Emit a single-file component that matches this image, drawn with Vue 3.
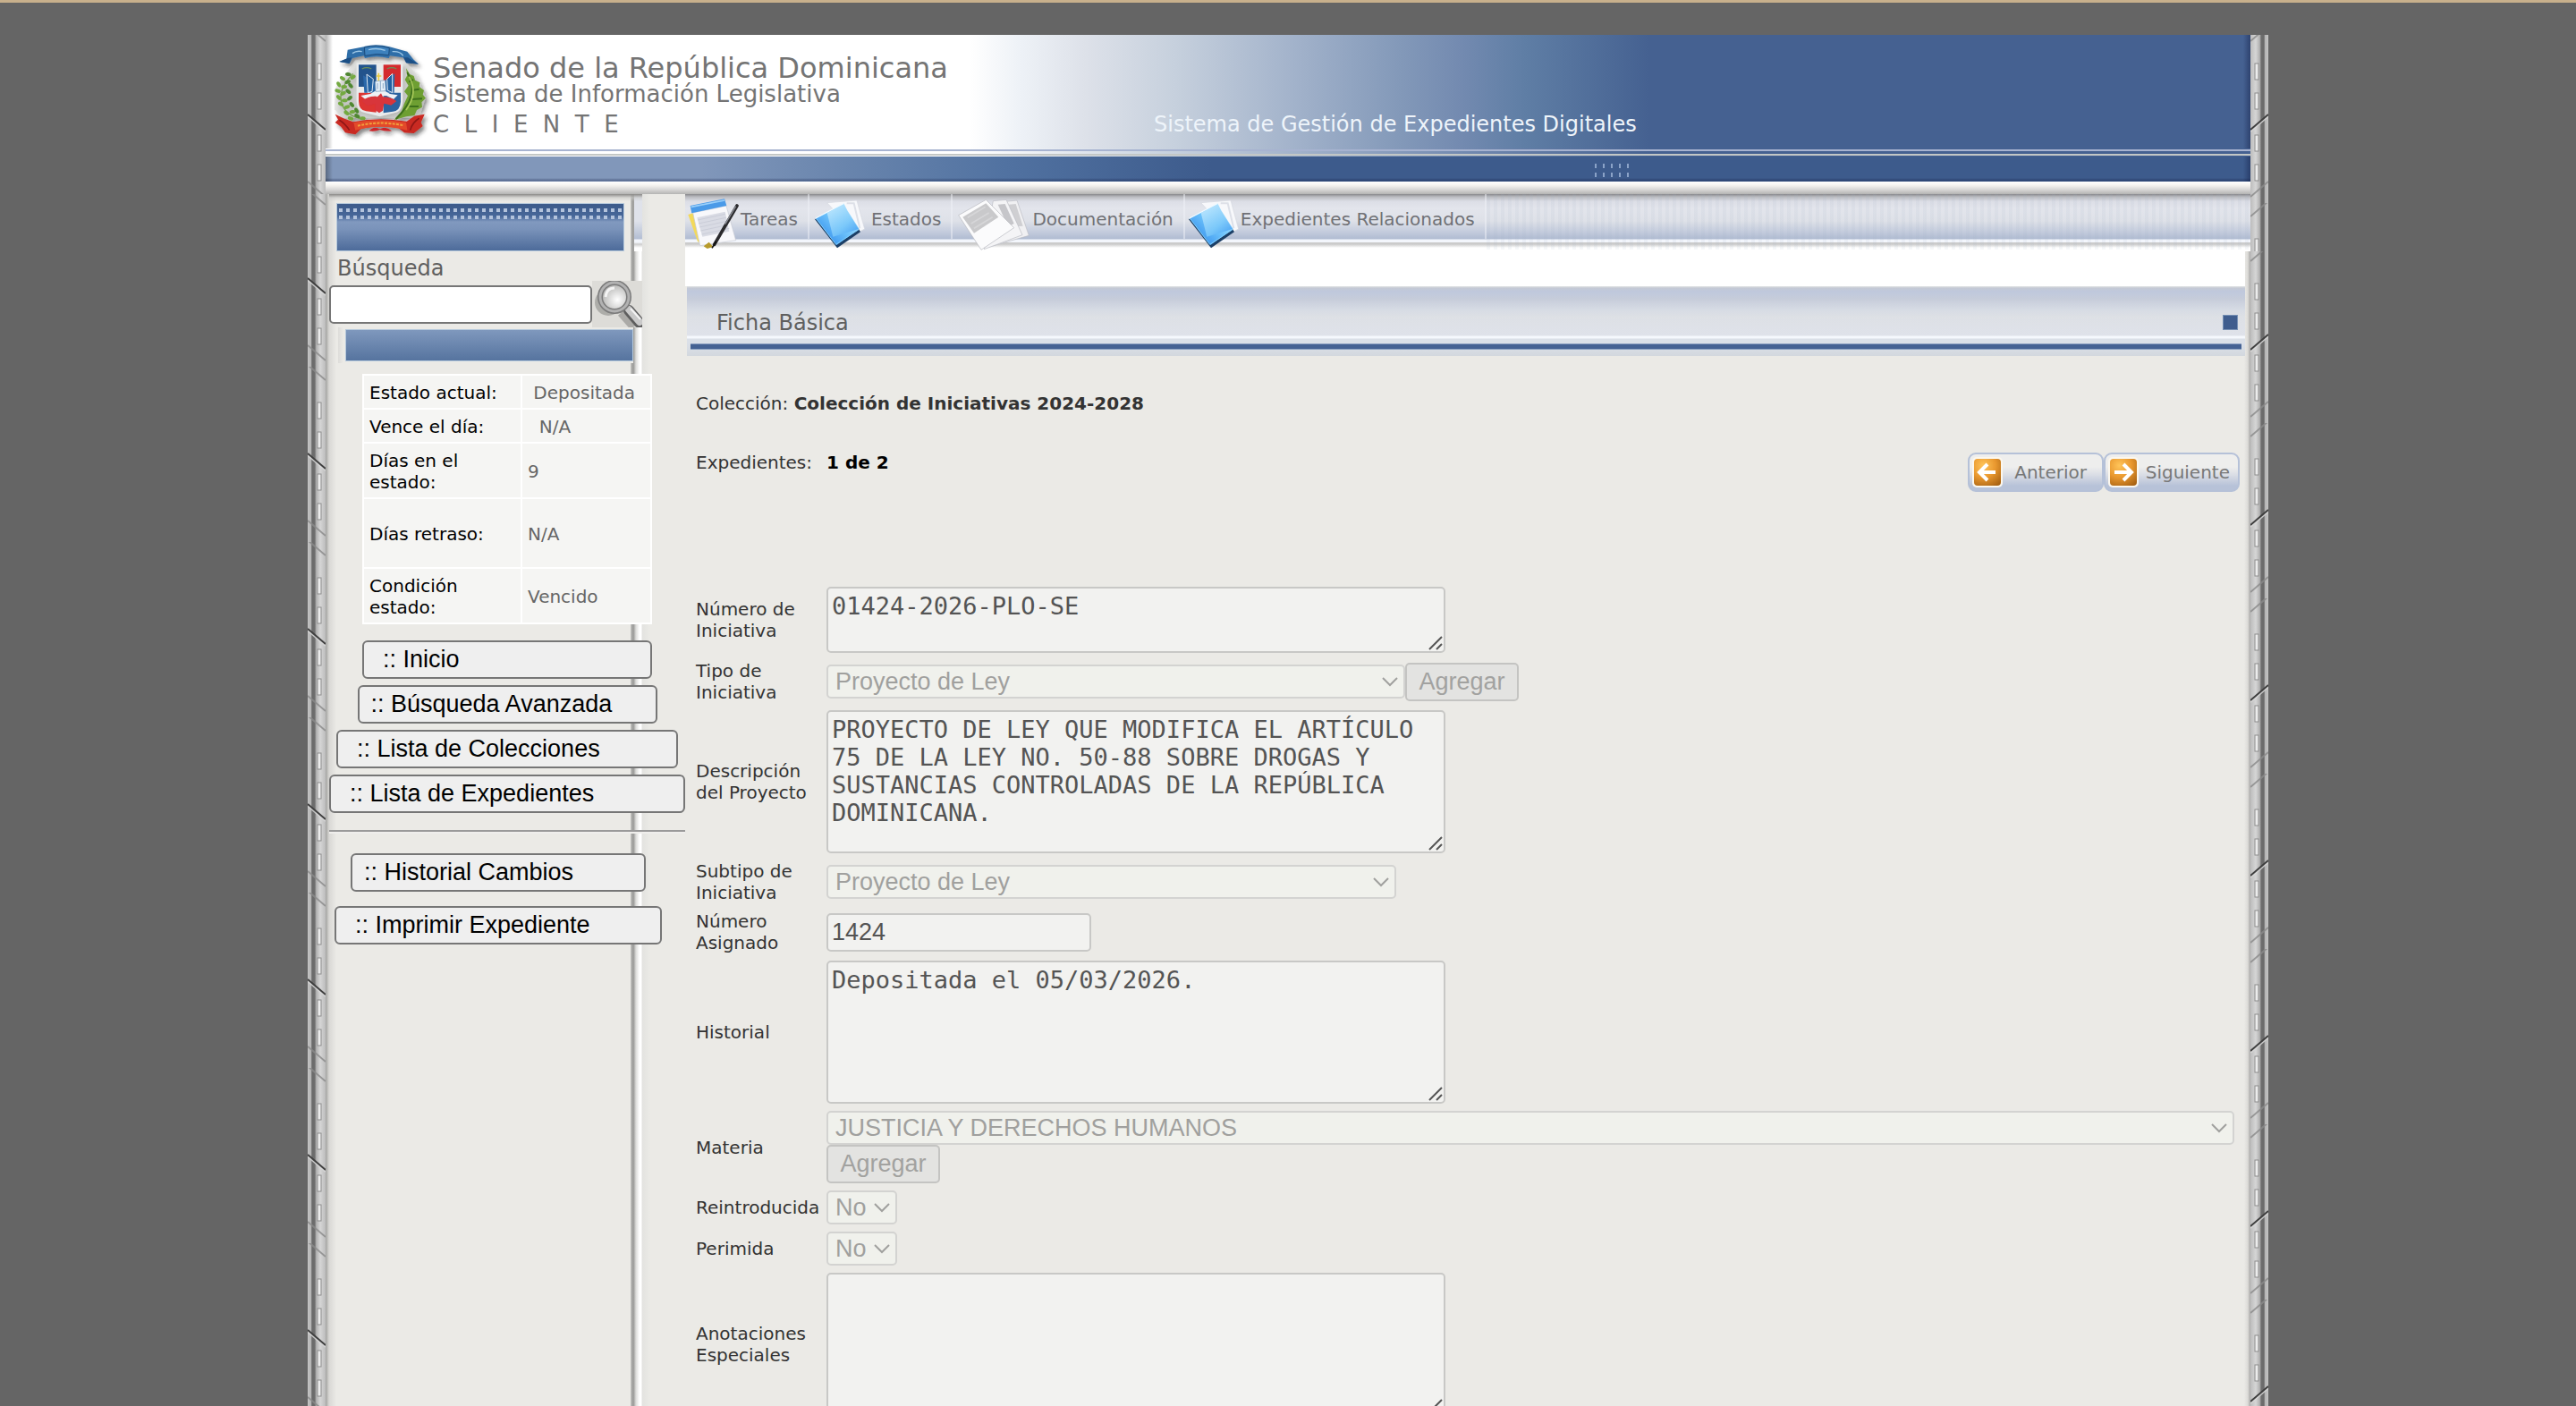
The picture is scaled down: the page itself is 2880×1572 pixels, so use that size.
<script setup>
import { ref } from 'vue'

const query = ref('')

const tabs = [
  { id: 'tareas', label: 'Tareas', icon: 'task', box: '18 30 186 180', width: 62 },
  { id: 'estados', label: 'Estados', icon: 'folder', box: '441 30 207 180', width: 69 },
  { id: 'documentacion', label: 'Documentación', icon: 'photos', box: '924 30 267 180', width: 89 },
  { id: 'relacionados', label: 'Expedientes Relacionados', icon: 'folder', box: '447 30 186 180', width: 62 },
]

const status = [
  { label: 'Estado actual:', value: '\u00a0Depositada', size: 'short' },
  { label: 'Vence el día:', value: '\u00a0\u00a0N/A', size: 'short' },
  { label: 'Días en el estado:', value: '9', size: 'medium' },
  { label: 'Días retraso:', value: 'N/A', size: 'tall' },
  { label: 'Condición estado:', value: 'Vencido', size: 'medium' },
]

const menu = [
  { label: ':: Inicio', width: 324, indent: true },
  { label: ':: Búsqueda Avanzada', width: 335, indent: false },
  { label: ':: Lista de Colecciones', width: 382, indent: true },
  { label: ':: Lista de Expedientes', width: 398, indent: true },
]

const tools = [
  { label: ':: Historial Cambios', width: 330, indent: false },
  { label: ':: Imprimir Expediente', width: 366, indent: true },
]

const numero = '01424-2026-PLO-SE'
const descripcion =
  'PROYECTO DE LEY QUE MODIFICA EL ARTÍCULO 75 DE LA LEY NO. 50-88 SOBRE DROGAS Y SUSTANCIAS CONTROLADAS DE LA REPÚBLICA DOMINICANA.'
const historial = 'Depositada el 05/03/2026.'

const laurel = [
  [152, 142, 10], [168, 152, -40], [133, 156, 30], [150, 168, -20], [120, 176, 60], [138, 184, 0],
  [160, 180, 50], [117, 198, 20], [135, 206, -30], [152, 200, 40], [120, 220, 50], [140, 230, 0],
  [157, 222, -40], [127, 242, 30], [148, 252, -20], [164, 244, 50], [146, 272, 40], [166, 268, -10],
  [182, 282, 30], [200, 290, 0], [160, 290, 20], [180, 264, 60],
]
</script>

<template>
  <div class="page">
    <svg class="defs" width="0" height="0" aria-hidden="true">
      <defs>
        <linearGradient id="railBase">
          <stop offset="0" stop-color="#c4c4c4" />
          <stop offset=".18" stop-color="#b4b4b4" />
          <stop offset=".24" stop-color="#6a6a6a" />
          <stop offset=".4" stop-color="#6e6e6e" />
          <stop offset=".48" stop-color="#b0b0b0" />
          <stop offset=".7" stop-color="#d6d6d6" />
          <stop offset="1" stop-color="#bcbcbc" />
        </linearGradient>
        <g id="railTile">
          <rect width="20" height="196" fill="url(#railBase)" />
          <g fill="#ececec" stroke="#8c8c8c">
            <rect x="11" y="40" width="4" height="18" />
            <rect x="11" y="73" width="4" height="18" />
            <rect x="11" y="120" width="4" height="18" />
            <rect x="11" y="153" width="4" height="18" />
          </g>
          <path d="M0 172l20 17M0 -2l20 17" stroke="#8a8a8a" stroke-width="2" opacity=".8" />
          <path d="M0 99l20 17" stroke="#d8d8d8" stroke-width="2" opacity=".8" />
          <path d="M0 97l20 17" stroke="#3e3e3e" stroke-width="2" />
        </g>
        <pattern id="railHead" width="20" height="196" patternUnits="userSpaceOnUse" y="-8">
          <use href="#railTile" />
        </pattern>
        <pattern id="railLeft" width="20" height="196" patternUnits="userSpaceOnUse" y="175">
          <use href="#railTile" />
        </pattern>
        <pattern id="railRight" width="20" height="196" patternUnits="userSpaceOnUse" y="42">
          <use href="#railTile" />
        </pattern>
        <linearGradient id="folderBlue" x1="0" y1="1" x2="1" y2="0">
          <stop offset="0" stop-color="#1f7ae6" />
          <stop offset=".5" stop-color="#6cc2fb" />
          <stop offset="1" stop-color="#d8f3ff" />
        </linearGradient>
        <linearGradient id="folderFront" x1="0" y1="0" x2="1" y2="1">
          <stop offset="0" stop-color="#d5f2ff" />
          <stop offset=".6" stop-color="#7cc9fa" />
          <stop offset="1" stop-color="#2f8ff0" />
        </linearGradient>
        <radialGradient id="orange" cx=".35" cy=".25" r=".9">
          <stop offset="0" stop-color="#ffc55a" />
          <stop offset=".5" stop-color="#e9982f" />
          <stop offset="1" stop-color="#a86212" />
        </radialGradient>
        <radialGradient id="lens" cx=".6" cy=".6" r=".7">
          <stop offset="0" stop-color="#fff" />
          <stop offset="1" stop-color="#a4a4a2" />
        </radialGradient>
        <filter id="soft" x="-20%" y="-20%" width="150%" height="150%">
          <feDropShadow dx="8" dy="10" stdDeviation="7" flood-color="#222" flood-opacity=".55" />
        </filter>
      </defs>
    </svg>

    <div class="shell">
      <svg class="rail" aria-hidden="true">
        <rect width="20" height="100%" fill="url(#railLeft)" />
        <rect width="20" height="178" fill="url(#railHead)" />
      </svg>

      <div class="sheet">
        <header class="banner">
          <div class="banner-top">
            <svg class="emblem" viewBox="100 40 330 330" role="img" aria-label="Escudo nacional">
              <g filter="url(#soft)">
                <path d="M176 96Q150 130 108 190L106 260 130 288 390 288 412 220 380 140 346 104Z" fill="#c9ccc8" opacity=".45" />
                <path d="M150 60L205 50 208 48Q248 38 290 50L350 66 370 92 388 108 348 104 336 86 292 80 288 88Q246 78 208 88L204 80 166 88 156 106 122 100 146 90Z" fill="#2f6ea8" />
                <path d="M206 52Q248 42 290 54L288 78Q248 70 208 80Z" fill="#3d81bd" stroke="#1c4b7c" stroke-width="3" />
                <path d="M166 72Q180 62 198 66M300 66Q326 64 336 80M220 60Q248 52 276 62" fill="none" stroke="#9cc7e6" stroke-width="4" />
                <path d="M122 100l34 6 8-20-14 2zM388 108l-42-4-8-18 14 0z" fill="#1d4f85" />
                <path d="M180 104H335V230Q334 268 306 272L258 284 210 272Q180 268 180 232Z" fill="#e9ebec" />
                <path d="M187 110H246V184H187Z" fill="#20528c" />
                <path d="M270 110H328V184H270Z" fill="#d42a2e" />
                <path d="M187 204H246V270L212 266Q188 264 187 232Z" fill="#dc3430" />
                <path d="M270 204H328V234Q326 264 302 267L270 272Z" fill="#2a63a0" />
                <path d="M202 146L246 172 250 204 206 204ZM308 140L272 166 268 204 306 204Z" fill="#2b68aa" />
                <path d="M214 142L236 158 232 200 218 204ZM300 140L282 158 284 196 300 204Z" fill="#2460a0" stroke="#dfe8f1" stroke-width="3" />
                <path d="M194 214L226 208 246 196 272 196 292 208 318 212 304 226 280 214 240 216 214 230Z" fill="#eef2f6" />
                <path d="M196 232Q226 212 250 218L262 206 268 218Q296 218 314 232L296 246 272 240 268 264 256 272 242 262 242 242 216 248Z" fill="#d8343a" />
                <path d="M242 166L276 162 278 198 244 200Z" fill="#e4eef8" stroke="#6f92b5" stroke-width="2" />
                <path d="M260 165V198M250 172v20M269 172v18" stroke="#5d86ad" stroke-width="2" />
                <path d="M254 138v26M246 148h17" stroke="#e9cb43" stroke-width="5" />
                <path d="M198 124q16-8 32 0M282 124q16-8 32 0" stroke="#6d8f5a" stroke-width="4" fill="none" />
                <path d="M168 140Q112 200 132 244Q146 284 208 294" fill="none" stroke="#75a04e" stroke-width="4" />
                <ellipse v-for="(leaf, i) in laurel" :key="i" :cx="leaf[0]" :cy="leaf[1]" rx="10" ry="6" :fill="i % 3 ? '#73a940' : '#4f8730'" :transform="`rotate(${leaf[2]} ${leaf[0]} ${leaf[1]})`" />
                <path d="M346 122L358 142 372 148 376 162 392 170 390 184 406 196 402 210 412 222 398 236 400 252 382 262 374 280 346 284 306 296 332 264 340 240 352 214 340 200 354 180 342 160 350 146Z" fill="#6e9f33" />
                <path d="M350 136Q396 210 312 292M370 160L356 168M390 192L364 196M400 224L364 226M388 250L352 250" fill="none" stroke="#3d6f1e" stroke-width="6" />
                <path d="M356 150Q388 206 346 262" fill="none" stroke="#a7c85a" stroke-width="5" />
                <path d="M108 276L136 290 168 302Q254 284 348 300L374 282 408 276 396 304 402 316 372 340 340 338 320 322Q256 310 196 324L176 344 142 338 128 318 108 304 118 294Z" fill="#c92a24" />
                <path d="M170 304Q256 288 346 304L350 330Q258 306 176 330Z" fill="#e34a2c" />
                <path d="M184 315Q256 297 338 314" fill="none" stroke="#f0a03c" stroke-width="6" stroke-dasharray="9 4" />
                <path d="M222 332q16-18 36-6 20-12 40 6-22 2-40-4-18 8-36 4z" fill="#c9252a" />
                <path d="M122 296q20 12 34 34M390 290q-24 14-30 40" fill="none" stroke="#8f1715" stroke-width="5" />
              </g>
            </svg>
            <div class="titles">
              <h1>Senado de la República Dominicana</h1>
              <p>Sistema de Información Legislativa</p>
              <p class="role">C&nbsp; L&nbsp; I&nbsp; E&nbsp; N&nbsp; T&nbsp; E</p>
            </div>
            <p class="slogan">Sistema de Gestión de Expedientes Digitales</p>
          </div>
          <div class="banner-lines"></div>
          <div class="banner-bar">
            <svg class="grip" width="38" height="16" aria-hidden="true">
              <path d="M1 0v5M10 0v5M19 0v5M28 0v5M37 0v5M1 10v5M10 10v5M19 10v5M28 10v5M37 10v5" stroke="#8ba3c8" stroke-width="2" />
            </svg>
          </div>
          <div class="banner-lip"></div>
        </header>

        <div class="columns">
          <aside class="sidebar">
            <div class="plate plate-dots">
              <div class="dots"></div>
            </div>
            <label class="search-label" for="busqueda">Búsqueda</label>
            <form class="search" @submit.prevent>
              <input id="busqueda" v-model="query" class="search-box" type="text" />
              <button class="search-go" type="submit" aria-label="Buscar">
                <svg width="56" height="52" viewBox="0 0 56 52">
                  <ellipse cx="18" cy="24" rx="15" ry="15" fill="#8d8d8b" opacity=".6" />
                  <path d="M32 36L46 52" stroke="#8a8a88" stroke-width="8" opacity=".6" />
                  <path d="M36 28L42 34" stroke="#777" stroke-width="5" />
                  <path d="M41 33L53 47" stroke="#5e5e5e" stroke-width="12" stroke-linecap="round" />
                  <path d="M41 32L53 46" stroke="#c9c9c9" stroke-width="8" stroke-linecap="round" />
                  <path d="M43 31L54 43" stroke="#f4f4f4" stroke-width="2" />
                  <circle cx="25" cy="18" r="16" fill="url(#lens)" stroke="#7b7b7b" stroke-width="6" />
                  <circle cx="25" cy="18" r="16" fill="none" stroke="#b2b2b2" stroke-width="3" />
                  <path d="M15 18q1-10 10-10" fill="none" stroke="#fff" stroke-width="3" opacity=".8" />
                </svg>
              </button>
            </form>
            <div class="plate-frame">
              <div class="plate plate-plain"></div>
            </div>

            <table class="status">
              <tbody>
                <tr v-for="row in status" :key="row.label" :class="row.size">
                  <th scope="row">{{ row.label }}</th>
                  <td>{{ row.value }}</td>
                </tr>
              </tbody>
            </table>

            <nav class="menu">
              <button v-for="item in menu" :key="item.label" type="button" class="menu-button" :class="{ indent: item.indent }" :style="{ width: item.width + 'px' }">{{ item.label }}</button>
            </nav>
            <hr class="rule" />
            <div class="menu menu-tools">
              <button v-for="item in tools" :key="item.label" type="button" class="menu-button" :class="{ indent: item.indent }" :style="{ width: item.width + 'px' }">{{ item.label }}</button>
            </div>
          </aside>

          <main class="main">
            <nav class="tabs">
              <a v-for="tab in tabs" :key="tab.id" class="tab" :href="'#' + tab.id">
                <svg class="tab-icon" :width="tab.width" height="60" :viewBox="tab.box" aria-hidden="true">
                  <g v-if="tab.icon === 'task'">
                    <path d="M28 90L46 84 74 190 60 180Z" fill="#f3d95b" />
                    <path d="M44 84L156 60 188 176 68 194Z" fill="#f8f8fb" stroke="#c6c9d2" stroke-width="2" />
                    <path d="M58 100L152 80 166 146 76 164Z" fill="#d9dbe4" />
                    <path d="M60 108l92-20M63 120l92-20M66 132l92-20M70 144l92-20M74 156l92-20" stroke="#c3c6d2" stroke-width="2" />
                    <path d="M35 60L150 37 157 60 40 85Z" fill="#4a9ae8" />
                    <path d="M38 64L150 42" stroke="#9bd0fa" stroke-width="5" />
                    <path d="M80 196l18-14 14 16-20 6z" fill="#b79a2c" />
                    <path d="M192 60L116 190" stroke="#2a2a2d" stroke-width="11" stroke-linecap="round" />
                    <path d="M188 62L152 122" stroke="#8c8f96" stroke-width="4" />
                    <path d="M122 180l-14 22" stroke="#111" stroke-width="5" />
                  </g>
                  <g v-else-if="tab.icon === 'folder'">
                    <path d="M500 50L600 42 626 138 596 154Z" fill="#f7f8fb" stroke="#d4d8e0" stroke-width="2" />
                    <path d="M566 52l24 0 20 84" fill="none" stroke="#dde0e8" stroke-width="6" />
                    <path d="M458 104L534 202 612 148 606 138Z" fill="#1c3f66" />
                    <path d="M462 102L556 52 568 76 608 138 532 192Z" fill="url(#folderBlue)" />
                    <path d="M500 84L556 56 568 78 606 138 520 164Z" fill="url(#folderFront)" opacity=".8" />
                    <path d="M462 102L556 52" stroke="#f1faff" stroke-width="4" />
                    <path d="M464 104l66 86 76-50" fill="none" stroke="#7fd0ff" stroke-width="3" />
                  </g>
                  <g v-else>
                    <path d="M1100 46L1140 42 1180 160 1040 200Z" fill="#f0f0f2" stroke="#b9bbc2" stroke-width="2" />
                    <path d="M1112 56L1136 54 1160 128 1134 130Z" fill="#cfcfd2" />
                    <path d="M1060 44L1104 40 1158 158 1030 206Z" fill="#f4f4f6" stroke="#b9bbc2" stroke-width="2" />
                    <path d="M1076 56L1100 54 1130 120 1110 130Z" fill="#c6c6ca" />
                    <path d="M944 92L1036 40 1130 134 1020 208Z" fill="#fbfbfc" stroke="#b6b8be" stroke-width="2" />
                    <path d="M958 98L1036 52 1078 98 996 152Z" fill="#c9c9cb" />
                    <path d="M974 100l60-36M986 120l60-36M996 136l62-38" stroke="#d6d6d8" stroke-width="5" />
                  </g>
                </svg>
                <span>{{ tab.label }}</span>
              </a>
              <div class="tabs-rest"></div>
            </nav>
            <div class="white-band"></div>
            <div class="panel-head">
              <div class="panel-title">
                <h2>Ficha Básica</h2>
                <span class="square"></span>
              </div>
              <div class="panel-line"></div>
            </div>

            <div class="content">
              <p class="collection">Colección: <b>Colección de Iniciativas 2024-2028</b></p>
              <div class="pager">
                <p class="count"><span>Expedientes:</span><b>1 de 2</b></p>
                <div class="pager-buttons">
                  <button type="button" class="pager-button">
                    <svg width="34" height="34" viewBox="0 0 34 34" aria-hidden="true">
                      <rect width="34" height="34" rx="5" fill="#fbf7ee" />
                      <rect x="2" y="2" width="30" height="30" rx="4" fill="url(#orange)" />
                      <path d="M26 17H9M17 8l-9 9 9 9" fill="none" stroke="#fff" stroke-width="4" />
                    </svg>
                    <span>Anterior</span>
                  </button>
                  <button type="button" class="pager-button">
                    <svg width="34" height="34" viewBox="0 0 34 34" aria-hidden="true">
                      <rect width="34" height="34" rx="5" fill="#fbf7ee" />
                      <rect x="2" y="2" width="30" height="30" rx="4" fill="url(#orange)" />
                      <path d="M7 17H25M17 8l9 9-9 9" fill="none" stroke="#fff" stroke-width="4" />
                    </svg>
                    <span>Siguiente</span>
                  </button>
                </div>
              </div>

              <form class="fields" @submit.prevent>
                <label for="numero">Número de Iniciativa</label>
                <textarea id="numero" class="area area-small" disabled :value="numero"></textarea>

                <label for="tipo">Tipo de Iniciativa</label>
                <div class="inline">
                  <select id="tipo" class="pick pick-wide" disabled><option>Proyecto de Ley</option></select>
                  <button type="button" class="add" disabled>Agregar</button>
                </div>

                <label for="descripcion">Descripción del Proyecto</label>
                <textarea id="descripcion" class="area" disabled :value="descripcion"></textarea>

                <label for="subtipo">Subtipo de Iniciativa</label>
                <select id="subtipo" class="pick pick-medium" disabled><option>Proyecto de Ley</option></select>

                <label for="asignado">Número Asignado</label>
                <input id="asignado" class="line" type="text" disabled value="1424" />

                <label for="historial">Historial</label>
                <textarea id="historial" class="area" disabled :value="historial"></textarea>

                <label for="materia">Materia</label>
                <div class="stack">
                  <select id="materia" class="pick pick-full" disabled><option>JUSTICIA Y DERECHOS HUMANOS</option></select>
                  <button type="button" class="add" disabled>Agregar</button>
                </div>

                <label for="reintroducida">Reintroducida</label>
                <select id="reintroducida" class="pick pick-short" disabled><option>No</option></select>

                <label for="perimida">Perimida</label>
                <select id="perimida" class="pick pick-short" disabled><option>No</option></select>

                <label for="anotaciones">Anotaciones Especiales</label>
                <textarea id="anotaciones" class="area" disabled></textarea>
              </form>
            </div>
          </main>
        </div>
      </div>

      <svg class="rail rail-mirror" aria-hidden="true">
        <rect width="20" height="100%" fill="url(#railRight)" />
        <rect width="20" height="242" fill="url(#railHead)" />
      </svg>
    </div>
  </div>
</template>

<style>
html {
  scrollbar-width: none;
  background: #656565;
}
body {
  margin: 0;
}
</style>

<style scoped>
.page,
.page * {
  box-sizing: border-box;
}
.page {
  border-top: 3px solid #c8b08c;
  padding: 36px 344px 0;
  background: #656565;
  color: #333;
  font: 20px/24px "DejaVu Sans", Verdana, sans-serif;
}
.page p,
.page h1,
.page h2 {
  margin: 0;
  font-weight: normal;
}
.defs {
  position: absolute;
}
.shell {
  display: flex;
}
.rail {
  flex: none;
  width: 20px;
  height: auto;
}
.rail-mirror {
  transform: scaleX(-1);
}
.sheet {
  flex: 1;
  min-width: 0;
  background: #ebeae6;
}

.banner-top {
  display: grid;
  grid-template-columns: 110px 808px 1fr;
  column-gap: 0;
  height: 127px;
  padding: 10px 0 0 8px;
  background:
    linear-gradient(90deg, rgba(0, 0, 0, .3), transparent 8px),
    linear-gradient(270deg, rgba(10, 20, 60, .4), transparent 8px),
    linear-gradient(90deg, #fff 720px, #eef2f7 775px, #dde1e9 850px, #c6d0dd 950px, #a3b3cb 1080px, #8399b9 1200px, #738ab0 1270px, #5f7ea5 1340px, #456191 1480px);
}
.emblem {
  width: 110px;
  height: 110px;
}
.titles {
  padding: 11px 0 0 2px;
  color: #747474;
}
.titles h1 {
  font-size: 32px;
  line-height: 32px;
}
.titles p {
  font-size: 26px;
  line-height: 26px;
}
.titles .role {
  margin-top: 8px;
}
.slogan {
  align-self: end;
  padding-bottom: 14px;
  color: #eef4fa;
  font-size: 24px;
  line-height: 26px;
}
.banner-lines {
  height: 9px;
  background:
    linear-gradient(transparent 0 1px, #a7b3d0 1px 3px, transparent 3px 6px, #c3c7c6 6px 8px, transparent 8px),
    linear-gradient(90deg, #fff 720px, #c6d0dd 950px, #a3b3cb 1080px, #738ab0 1270px, #456191 1480px);
}
.banner-bar {
  height: 28px;
  padding: 8px 0 0 1419px;
  background:
    linear-gradient(90deg, rgba(0, 0, 0, .3), transparent 8px),
    linear-gradient(270deg, rgba(10, 20, 60, .4), transparent 8px),
    linear-gradient(transparent 24px, rgba(20, 30, 70, .4) 27px, transparent),
    linear-gradient(90deg, #8197ba 420px, #6985ad 580px, #5172a1 760px, #3d5b8c 990px);
}
.grip {
  display: block;
}
.banner-lip {
  height: 14px;
  background: linear-gradient(#fff, #f6f4f1 4px, #d8d7d6 9px, #b4b4b3);
}

.columns {
  display: grid;
  grid-template-columns: 398px 1fr;
  padding-left: 4px;
  background:
    linear-gradient(90deg, #a2a2a0, #d9d8d5 4px, #ebeae6 12px) no-repeat,
    #ebeae6;
}

.sidebar {
  padding-top: 10px;
  background:
    linear-gradient(#8b8a88, rgba(200, 200, 198, .6) 4px, transparent) 0 0 / 350px 8px no-repeat,
    linear-gradient(#dfe2ea, #dfe2ea 30px, #b3bed3 50px, #f2f5fb 51px 54px, #ccc 56px, #fff 60px) 341px 0 / 9px 64px no-repeat,
    linear-gradient(90deg, #c4c4c1, #969694 3px, #dcdcda 6px, #fff 10px, #fff 12px, #e3e3e0 13px, #ebeae6) 337px 0 / 22px 100% no-repeat;
}
.plate {
  border: 1px solid #b7cadc;
}
.plate-dots {
  width: 322px;
  height: 54px;
  margin-left: 8px;
  padding: 5px 2px;
  background: linear-gradient(#3e5c8c 2px, #48689a 14px, #8199bf 20px, #7a93ba 28px, #4d6b9a);
}
.dots {
  height: 12px;
  background: #b3c3dc;
  mask: repeating-linear-gradient(90deg, #000 0 4px, transparent 4px 8px), linear-gradient(#000 4px, transparent 4px 8px, #000 8px);
  mask-composite: intersect;
}
.search-label {
  display: block;
  margin-top: 5px;
  padding-left: 9px;
  color: #5f5f5f;
  font-size: 24px;
  line-height: 28px;
}
.search {
  display: flex;
  align-items: center;
}
.search-box {
  width: 294px;
  height: 43px;
  border: 2px solid #767676;
  border-radius: 5px;
  background: #fff;
  padding: 2px 4px;
  font: 27px/31px "Liberation Sans", Arial, sans-serif;
}
.search-go {
  width: 56px;
  height: 52px;
  padding: 0;
  border: 0;
  background: #dddcd8;
  overflow: hidden;
}
.search-go svg {
  display: block;
}
.plate-frame {
  width: 330px;
  height: 40px;
  margin-left: 10px;
  padding: 2px 0 2px 8px;
  background: linear-gradient(90deg, #dddcd9, #ebeae6 6px);
}
.plate-plain {
  height: 36px;
  background: linear-gradient(#7f98bd, #56749f);
}

.status {
  width: 324px;
  margin: 12px auto 18px;
  border-collapse: separate;
  border-spacing: 2px;
  background: #fff;
  table-layout: fixed;
}
.status th,
.status td {
  padding: 1px 6px 0;
  background: #f5f5f3;
  text-align: left;
  font-weight: normal;
  white-space: nowrap;
}
.status th {
  width: 175px;
  color: #000;
  white-space: normal;
}
.status td {
  color: #666;
}
.short {
  height: 36px;
}
.medium {
  height: 60px;
}
.tall {
  height: 76px;
}

.menu {
  display: flex;
  flex-direction: column;
  align-items: center;
  gap: 7px;
}
.menu-tools {
  gap: 16px;
  padding-right: 20px;
}
.menu-button {
  height: 43px;
  padding: 0 0 0 13px;
  border: 2px solid #767676;
  border-radius: 6px;
  background: #efefef;
  color: #000;
  font: 27px/31px "Liberation Sans", Arial, sans-serif;
  text-align: left;
  white-space: nowrap;
}
.menu-button.indent {
  padding-left: 21px;
}
.rule {
  height: 4px;
  margin: 19px 0 22px;
  border: 0;
  border-top: 2px solid #9a9a9a;
  border-bottom: 2px solid #efeeec;
}

.main {
  min-width: 0;
  background: linear-gradient(270deg, #aaa9a8, #dcdbd8 3px, #ebeae6 7px);
}
.tabs {
  display: flex;
  height: 64px;
  background: linear-gradient(#88888b, #b9babf 3px, #dcdee6 8px, #e3e5ec 16px, #dee1e8 30px, #c4ccdd 42px, #b0bcd2 50px, #f3f6fc 51px 54px, #cbcbcb 54px 56px, #fff 60px);
}
.tab {
  display: flex;
  flex: none;
  height: 50px;
  padding-right: 11px;
  border-right: 2px solid rgba(240, 242, 247, .5);
  color: #707176;
  text-decoration: none;
}
.tab-icon {
  flex: none;
  margin-top: 3px;
}
.tab span {
  padding-top: 16px;
}
.tabs-rest {
  flex: 1;
  height: 62px;
  background: repeating-linear-gradient(90deg, rgba(160, 175, 195, .1) 0 4px, transparent 4px 8px);
}
.white-band {
  height: 39px;
  margin-right: 6px;
  background: #fff;
}
.panel-head {
  height: 78px;
  margin: 0 6px 0 2px;
  padding: 0 4px;
  background: linear-gradient(#e3e5e6, #c4c9d4 2px, #bfc8dd 6px, #c6ccda 14px, #d6dbe4 26px, #dde0e5 34px, #dfe2ea 55px, #f5f8fd 56px 58px, #dbe0e8 59px 64px, #d3d8de);
}
.panel-title {
  display: flex;
  align-items: center;
  justify-content: space-between;
  height: 64px;
  padding: 17px 4px 0 29px;
}
.panel-title h2 {
  color: #5f5f5f;
  font-size: 24px;
  line-height: 28px;
}
.square {
  width: 17px;
  height: 17px;
  border: 1px solid #7690b4;
  background: #3f5d8e;
}
.panel-line {
  height: 7px;
  background: #456293;
  border: solid #8ba0c0;
  border-width: 1px 0;
}

.content {
  padding: 41px 12px 40px;
}
.pager {
  display: flex;
  align-items: flex-start;
  justify-content: space-between;
  margin: 42px 0 106px;
}
.count span {
  display: inline-block;
  width: 146px;
}
.count b {
  color: #000;
}
.pager-buttons {
  display: flex;
  padding-top: 1px;
}
.pager-button {
  display: flex;
  align-items: center;
  justify-content: space-between;
  width: 152px;
  height: 44px;
  padding: 0 9px 0 3px;
  border: 2px solid #b5c1d8;
  border-radius: 9px;
  background: linear-gradient(#eeeeed 35%, #dcdfe6 55%, #b7c2d8 88%);
  color: #777;
  font: 20px/24px "DejaVu Sans", Verdana, sans-serif;
}
.pager-button:first-child {
  padding-right: 17px;
}

.fields {
  display: grid;
  grid-template-columns: 138px 1fr;
  gap: 8px;
  align-items: center;
  justify-items: start;
  padding-right: 6px;
}
.area,
.line,
.pick,
.add {
  display: block;
  margin: 0;
  border: 2px solid #c8c8c6;
  border-radius: 5px;
  opacity: 1;
  font: 27px/31px "Liberation Sans", Arial, sans-serif;
}
.area {
  width: 692px;
  height: 160px;
  padding: 4px;
  overflow: hidden;
  resize: none;
  background: #f2f2f0 url("data:image/svg+xml,%3Csvg xmlns='http://www.w3.org/2000/svg' width='16' height='16'%3E%3Cpath d='M1 15L15 1M9 15l6-6' stroke='%23555' stroke-width='2'/%3E%3C/svg%3E") right 1px bottom 1px no-repeat;
  color: #545454;
  font-family: "DejaVu Sans Mono", Menlo, monospace;
}
.area-small {
  height: 74px;
}
.line {
  width: 296px;
  height: 43px;
  padding: 2px 4px;
  background: #f2f2f0;
  color: #545454;
}
.pick {
  height: 38px;
  padding: 0 30px 0 8px;
  appearance: none;
  border-color: #d3d3d1;
  background: #f0f1ec url("data:image/svg+xml,%3Csvg xmlns='http://www.w3.org/2000/svg' width='18' height='11'%3E%3Cpath d='M1 1l8 8 8-8' fill='none' stroke='%23a0a09e' stroke-width='2'/%3E%3C/svg%3E") right 6px center no-repeat;
  color: #a0a09e;
}
.pick-wide {
  width: 647px;
}
.pick-medium {
  width: 637px;
}
.pick-full {
  width: 100%;
}
.pick-short {
  width: 79px;
}
.add {
  width: 127px;
  height: 43px;
  padding: 0;
  border-color: #c4c4c2;
  background: #e3e3e1;
  color: #a2a2a0;
}
.inline {
  display: flex;
  align-items: center;
  height: 48px;
}
.stack {
  width: 100%;
}
</style>
